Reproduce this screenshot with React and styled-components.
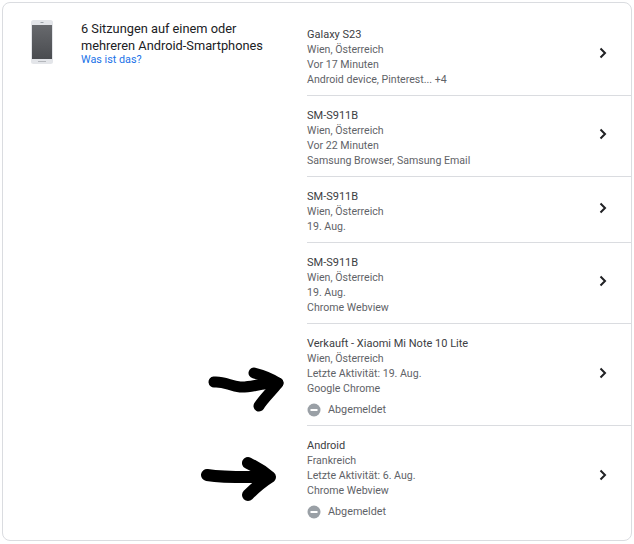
import React from "react";
import styled, { createGlobalStyle } from "styled-components";

const Global = createGlobalStyle`
  html, body { margin: 0; padding: 0; background: #fff; }
  body { font-family: Roboto, "Liberation Sans", sans-serif; -webkit-font-smoothing: antialiased; }
`;

const Page = styled.div`
  position: relative;
  width: 634px;
  height: 544px;
  padding: 2px;
  box-sizing: border-box;
`;

const Card = styled.section`
  box-sizing: border-box;
  height: 539px;
  border: 1px solid #dadce0;
  border-radius: 8px;
  display: flex;
`;

const Summary = styled.div`
  width: 304px;
  flex: none;
  display: flex;
  align-items: flex-start;
  padding: 17px 0 0 28px;
  box-sizing: border-box;
`;

const Phone = styled.svg`
  width: 22px;
  height: 45px;
  flex: none;
`;

const SummaryText = styled.div`
  margin-left: 28px;
  width: 200px;
`;

const Heading = styled.h2`
  margin: 0;
  font-size: 12.8px;
  line-height: 17px;
  font-weight: 400;
  color: #202124;
`;

const Help = styled.a`
  display: block;
  margin-top: -1px;
  font-size: 10.8px;
  line-height: 14px;
  color: #1a73e8;
`;

const Sessions = styled.ul`
  list-style: none;
  margin: 0;
  padding: 24px 0 0;
  flex: 1;
  min-width: 0;
`;

const Row = styled.li`
  display: flex;
  align-items: center;
  justify-content: space-between;
  box-sizing: border-box;
  padding: ${(p) => (p.$first ? "0 25px 8px 0" : "12px 25px 8px 0")};
  border-top: ${(p) => (p.$first ? "none" : "1px solid #dadce0")};
`;

const Info = styled.div`
  min-width: 0;
`;

const Device = styled.div`
  font-size: 11px;
  line-height: 15px;
  color: #3c4043;
`;

const Detail = styled.div`
  font-size: 10.6px;
  line-height: 15px;
  color: #5f6368;
`;

const Status = styled.div`
  display: flex;
  align-items: center;
  gap: 7px;
  margin-top: 6px;
  font-size: 10.8px;
  line-height: 15px;
  color: #5f6368;
`;

const Chevron = styled.svg`
  width: 24px;
  height: 24px;
  flex: none;
  margin: 0 -9px 8px 0;
`;

const Overlay = styled.svg`
  position: absolute;
  left: 0;
  top: 0;
  pointer-events: none;
`;

const rows = [
  { name: "Galaxy S23", details: ["Wien, Österreich", "Vor 17 Minuten", "Android device, Pinterest... +4"] },
  { name: "SM-S911B", details: ["Wien, Österreich", "Vor 22 Minuten", "Samsung Browser, Samsung Email"] },
  { name: "SM-S911B", details: ["Wien, Österreich", "19. Aug."] },
  { name: "SM-S911B", details: ["Wien, Österreich", "19. Aug.", "Chrome Webview"] },
  { name: "Verkauft - Xiaomi Mi Note 10 Lite", details: ["Wien, Österreich", "Letzte Aktivität: 19. Aug.", "Google Chrome"], out: true },
  { name: "Android", details: ["Frankreich", "Letzte Aktivität: 6. Aug.", "Chrome Webview"], out: true },
];

const PhoneIcon = () => (
  <Phone viewBox="0 0 22 45" aria-hidden="true">
    <defs>
      <linearGradient id="scr" x1="0" y1="0" x2="0" y2="1">
        <stop offset="0" stopColor="#67696d" />
        <stop offset="1" stopColor="#4a4c50" />
      </linearGradient>
    </defs>
    <rect x="0" y="0" width="22" height="44" rx="2.5" fill="#e3e5e9" />
    <rect x="1" y="5" width="20" height="34" fill="url(#scr)" />
    <rect x="9.5" y="2" width="3" height="1" fill="#9aa0a6" />
    <rect x="7" y="41" width="8" height="1" fill="#b4b7bc" />
  </Phone>
);

const OutIcon = () => (
  <svg width="14" height="14" viewBox="0 0 14 14" aria-hidden="true">
    <circle cx="7" cy="7" r="6.5" fill="#9aa0a6" />
    <rect x="3.5" y="6" width="7" height="2" fill="#fff" />
  </svg>
);

export default function App() {
  return (
    <>
      <Global />
      <Page>
        <Card>
          <Summary>
            <PhoneIcon />
            <SummaryText>
              <Heading>6 Sitzungen auf einem oder mehreren Android-Smartphones</Heading>
              <Help>Was ist das?</Help>
            </SummaryText>
          </Summary>
          <Sessions>
            {rows.map((r, i) => (
              <Row key={i} $first={i === 0}>
                <Info>
                  <Device>{r.name}</Device>
                  {r.details.map((d) => (
                    <Detail key={d}>{d}</Detail>
                  ))}
                  {r.out && (
                    <Status>
                      <OutIcon />
                      Abgemeldet
                    </Status>
                  )}
                </Info>
                <Chevron viewBox="0 0 24 24" aria-hidden="true">
                  <path d="M9.5 7.5 14 12l-4.5 4.5" fill="none" stroke="#202124" strokeWidth="2" />
                </Chevron>
              </Row>
            ))}
          </Sessions>
        </Card>
        <Overlay width="634" height="544" viewBox="0 0 634 544" aria-hidden="true">
          <g fill="none" stroke="#000" strokeLinecap="round" strokeLinejoin="round">
            <path d="M214 382c10-1 16 4 26 5 10 1 20-4 38-4" strokeWidth="11" />
            <path d="M254 373c8 2 18 6 24 10-6 8-14 15-19 23" strokeWidth="11" />
            <path d="M207 475c20 3 40 2 62 2" strokeWidth="12" />
            <path d="M248 463c8 4 16 9 22 14-8 5-16 12-22 18" strokeWidth="12" />
          </g>
        </Overlay>
      </Page>
    </>
  );
}
